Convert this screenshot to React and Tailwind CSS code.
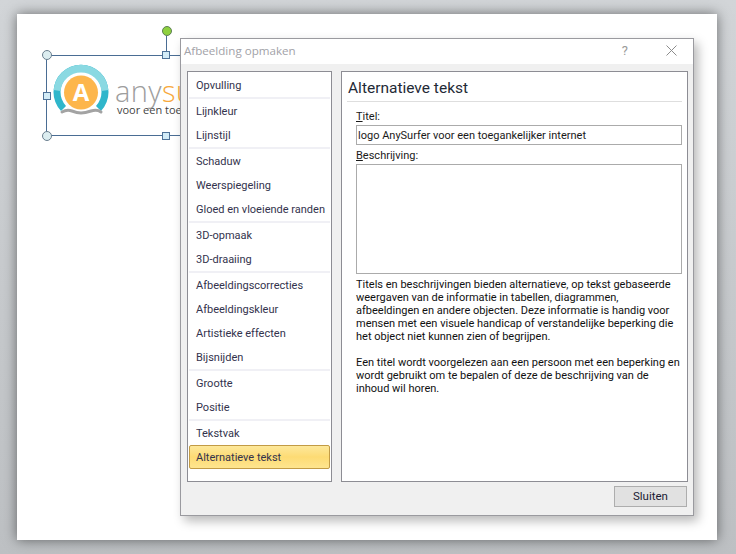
const F = { fontFamily: 'Roboto, "Liberation Sans", sans-serif' };
const O = { fontFamily: '"Open Sans", "Liberation Sans", sans-serif' };

const groups = [
  ["Opvulling"],
  ["Lijnkleur", "Lijnstijl"],
  ["Schaduw", "Weerspiegeling", "Gloed en vloeiende randen"],
  ["3D-opmaak", "3D-draaiing"],
  ["Afbeeldingscorrecties", "Afbeeldingskleur", "Artistieke effecten", "Bijsnijden"],
  ["Grootte", "Positie"],
  ["Tekstvak"],
];

function Logo() {
  return (
    <div className="absolute left-[35px] top-[50px] w-[128px] h-[70px] overflow-hidden">
      <svg width="60" height="64" viewBox="0 0 60 64" className="absolute left-0 top-0">
        <path d="M9 47 A27.5 27.5 0 1 1 49 47 L44 42 A20.5 20.5 0 1 0 14 42 Z" fill="#2fb6cb" />
        <path d="M1.6 26 A27.5 27.5 0 0 1 56.4 26 L49.4 27 A20.5 20.5 0 0 0 8.6 27 Z" fill="#8ad9e2" />
        <circle cx="29" cy="28.5" r="17" fill="#fdb64c" />
        <text x="29" y="37" textAnchor="middle" fontSize="24" fontWeight="700" fill="#fff" fontFamily="Open Sans, sans-serif">A</text>
        <path d="M10 48 q5 -3 10 -1 t9 2 t10 -2 t10 1" fill="none" stroke="#a3a3a3" strokeWidth="3" strokeLinecap="round" />
      </svg>
      <div className="absolute left-[63px] top-[9px] text-[29px] leading-[36px] text-[#9d9d9d] font-light tracking-[0.4px] whitespace-nowrap" style={O}>
        any<span className="text-[#f7a93c]">su</span>
      </div>
      <div className="absolute left-[65px] top-[38px] text-[11px] leading-[16px] text-[#444] font-medium whitespace-nowrap" style={O}>
        voor een toe
      </div>
    </div>
  );
}

function Handles() {
  const sq = "absolute w-[8px] h-[8px] bg-[#d3ecf7] border border-[#4f7298]";
  const ci = "absolute w-[10px] h-[10px] rounded-full bg-[#dcedf0] border border-[#6b7f8f]";
  return (
    <>
      <div className="absolute left-[29px] top-[41px] w-[240px] h-[81px] border border-[#4a6d94]" />
      <div className="absolute left-[149px] top-[22px] w-px h-[19px] bg-[#4a6d94]" />
      <div className="absolute left-[145px] top-[12px] w-[10px] h-[10px] rounded-full bg-[#8fd13f] border border-[#5d7f55]" />
      <div className={ci} style={{ left: 25, top: 36 }} />
      <div className={ci} style={{ left: 25, top: 117 }} />
      <div className={sq} style={{ left: 145, top: 37 }} />
      <div className={sq} style={{ left: 145, top: 118 }} />
      <div className={sq} style={{ left: 26, top: 78 }} />
    </>
  );
}

function Sidebar() {
  return (
    <div className="w-[145px] h-[411px] border border-[#8d8d94] bg-white pt-px px-px flex flex-col">
      {groups.map((g, i) => (
        <div key={i} className="flex flex-col">
          {i > 0 && <div className="h-[2px] bg-[#f0f0f5]" />}
          {g.map((t) => (
            <div key={t} className="h-6 flex items-center pl-[7px] pt-[2px] text-[11px] text-[#33334d] whitespace-nowrap">{t}</div>
          ))}
        </div>
      ))}
      <div className="h-6 flex items-center pl-[6px] pt-[2px] text-[11px] text-[#33334d] rounded-[2px] border border-[#c29b45] bg-gradient-to-b from-[#fde89a] via-[#fddb74] to-[#fee58f] whitespace-nowrap">
        Alternatieve tekst
      </div>
    </div>
  );
}

function Content() {
  return (
    <div className="w-[347px] h-[411px] border border-[#8d8d94] bg-white flex flex-col px-[5px]">
      <div className="h-[30px] pl-px flex items-end pb-[2px] border-b border-[#dedede] text-[15.5px] leading-[22px] text-[#1f2a36] w-[335px] whitespace-nowrap">
        Alternatieve tekst
      </div>
      <div className="pl-[9px] w-[335px] flex flex-col text-[11px] text-[#1a1a1a]">
        <div className="h-[23px] flex items-end leading-[16px]"><span><span className="underline">T</span>itel:</span></div>
        <div className="h-5 border border-[#ababab] pl-px pt-[2px] flex items-center whitespace-nowrap">logo AnySurfer voor een toegankelijker internet</div>
        <div className="h-[19px] flex items-end leading-[16px]"><span><span className="underline">B</span>eschrijving:</span></div>
        <div className="h-[110px] border border-[#ababab]" />
        <div className="mt-[4px] leading-[13px] text-[#111] w-[330px]">
          <p className="whitespace-nowrap">Titels en beschrijvingen bieden alternatieve, op tekst gebaseerde<br />weergaven van de informatie in tabellen, diagrammen,<br />afbeeldingen en andere objecten. Deze informatie is handig voor<br />mensen met een visuele handicap of verstandelijke beperking die<br />het object niet kunnen zien of begrijpen.</p>
          <p className="mt-[13px] whitespace-nowrap">Een titel wordt voorgelezen aan een persoon met een beperking en<br />wordt gebruikt om te bepalen of deze de beschrijving van de<br />inhoud wil horen.</p>
        </div>
      </div>
    </div>
  );
}

function Dialog() {
  return (
    <div className="absolute left-[163px] top-[24px] w-[514px] h-[478px] border border-[#9a9a9f] bg-white flex flex-col shadow-[4px_5px_10px_rgba(0,0,0,0.28)]" style={F}>
      <div className="h-[25px] flex items-center pl-[3px] pr-[16px] pb-[2px] bg-white">
        <span className="text-[11.6px] text-[#a2a2a8]" style={O}>Afbeelding opmaken</span>
        <span className="ml-auto text-[13px] text-[#9a9a9a] mr-[38px]">?</span>
        <svg width="11" height="11" viewBox="0 0 11 11"><path d="M0.5 0.5 L10.5 10.5 M10.5 0.5 L0.5 10.5" stroke="#8c8c8c" strokeWidth="1" fill="none" /></svg>
      </div>
      <div className="flex-1 bg-[#f0f0f0] pt-[7px] pl-[6px] pr-[5px] flex flex-col">
        <div className="flex gap-[9px]">
          <Sidebar />
          <Content />
        </div>
        <div className="flex justify-end mt-[4px] pr-px">
          <button className="w-[73px] h-[21px] bg-[#e1e1e1] border border-[#adadad] text-[11.5px] text-[#1a1a33] flex items-center justify-center">Sluiten</button>
        </div>
      </div>
    </div>
  );
}

export default function App() {
  return (
    <div className="w-[736px] h-[554px] pt-[14px] pl-[17px] bg-gradient-to-b from-[#d2d5d8] to-[#bdc0c3] overflow-hidden">
      <div className="relative w-[700px] h-[526px] bg-white shadow-[0_0_12px_rgba(0,0,0,0.5)]">
        <Logo />
        <Handles />
        <Dialog />
      </div>
    </div>
  );
}
